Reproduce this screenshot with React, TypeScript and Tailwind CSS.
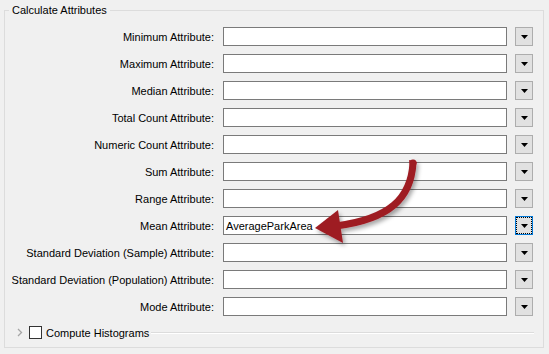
import React from "react";

const rows: { label: string; value?: string; focused?: boolean }[] = [
  { label: "Minimum Attribute:" },
  { label: "Maximum Attribute:" },
  { label: "Median Attribute:" },
  { label: "Total Count Attribute:" },
  { label: "Numeric Count Attribute:" },
  { label: "Sum Attribute:" },
  { label: "Range Attribute:" },
  { label: "Mean Attribute:", value: "AverageParkArea", focused: true },
  { label: "Standard Deviation (Sample) Attribute:" },
  { label: "Standard Deviation (Population) Attribute:" },
  { label: "Mode Attribute:" },
];

function DropButton({ focused }: { focused?: boolean }) {
  return (
    <div
      className={
        "ml-[8px] flex h-[19px] w-[18px] items-center justify-center bg-[#e1e1e1] " +
        (focused ? "border border-[#0078d7]" : "border border-[#adadad]")
      }
    >
      <div
        className={
          "flex h-full w-full items-center justify-center " +
          (focused ? "outline outline-1 outline-dotted outline-black -outline-offset-1" : "")
        }
      >
        <svg width="7" height="4" viewBox="0 0 7 4">
          <polygon points="0,0 7,0 3.5,4" fill="#000" />
        </svg>
      </div>
    </div>
  );
}

export default function App() {
  return (
    <div
      className="relative h-[354px] w-[549px] overflow-hidden bg-[#f0f0f0] pl-[4px] pt-[10px] text-[11px] text-black"
      style={{ fontFamily: '"Liberation Sans", Arial, sans-serif' }}
    >
      <div className="relative h-[338px] w-[540px] border border-[#dcdcdc]">
        <div className="absolute -top-[9px] left-[4px] bg-[#f0f0f0] px-[3px] leading-[16px]">
          Calculate Attributes
        </div>
        <div className="flex flex-col gap-[8px] pt-[16px]">
          {rows.map((r) => (
            <div key={r.label} className="flex h-[19px] items-center">
              <div className="w-[209px] whitespace-nowrap text-right leading-[16px]">{r.label}</div>
              <div className="ml-[9px] flex h-[19px] w-[284px] items-center border border-[#7a7a7a] bg-white px-[2px] leading-[16px]">
                {r.value ?? ""}
              </div>
              <DropButton focused={r.focused} />
            </div>
          ))}
          <div className="mt-[2px] flex h-[13px] items-center">
            <svg width="6" height="9" viewBox="0 0 6 9" className="ml-[12px]">
              <polyline points="1,1 4.5,4.5 1,8" fill="none" stroke="#a6a6a6" strokeWidth="1.3" />
            </svg>
            <div className="ml-[6px] h-[13px] w-[13px] border border-[#333] bg-white" />
            <div className="ml-[4px] whitespace-nowrap leading-[16px]">Compute Histograms</div>
            <div className="ml-[2px] mr-[9px] flex-1 border-t border-b border-t-[#dcdcdc] border-b-white" />
          </div>
        </div>
      </div>
      <svg className="pointer-events-none absolute left-0 top-0" width="549" height="354">
        <defs>
          <filter id="sh" x="-20%" y="-20%" width="140%" height="140%">
            <feDropShadow dx="2" dy="3" stdDeviation="2" floodColor="#000" floodOpacity="0.35" />
          </filter>
        </defs>
        <g filter="url(#sh)">
          <path d="M413 163 C411 198 390 219 336 226" fill="none" stroke="#9e1b24" strokeWidth="7" strokeLinecap="round" />
          <path d="M409 160 L417 162 L412 178 Z" fill="#9e1b24" />
          <polygon points="315,228 338,210 343,243" fill="#9e1b24" />
        </g>
      </svg>
    </div>
  );
}
